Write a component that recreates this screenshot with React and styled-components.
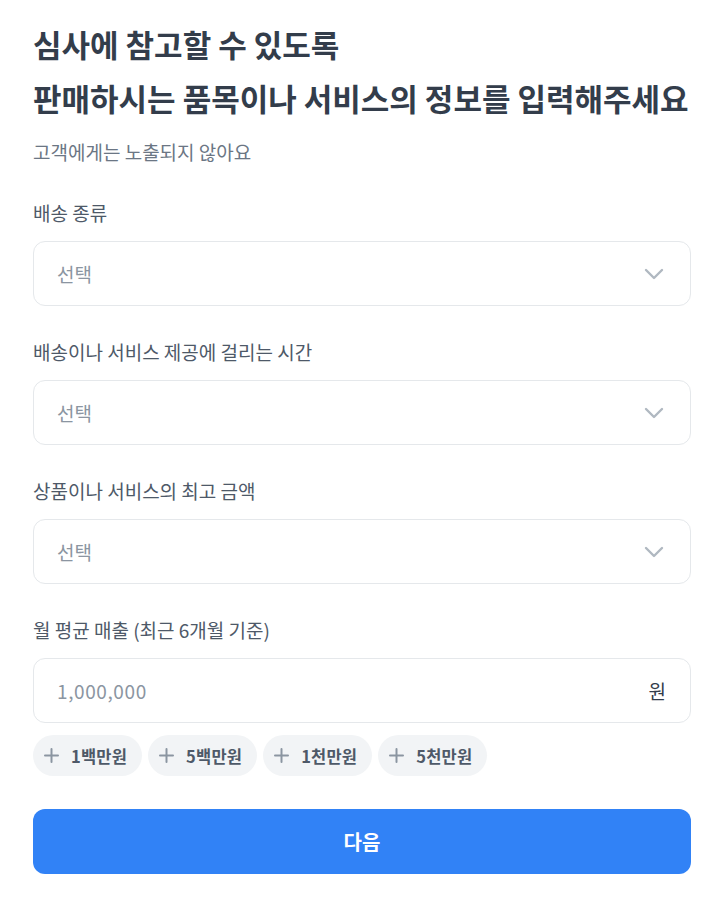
import React, {useState} from 'react'
import styled, {createGlobalStyle} from 'styled-components'

const Global = createGlobalStyle`
    html, body {
        margin:0;
        padding:0;
        background:#ffffff;
    }
    body {
        font-family: "Noto Sans CJK KR", "Noto Sans", sans-serif;
    }
`

const Page = styled.div`
    width:658px;
    padding:17px 33px 30px;
    display:flex;
    flex-direction:column;
`

const Title = styled.h1`
    margin:0;
    font-size:31px;
    line-height:54px;
    font-weight:700;
    color:#333d4b;
`

const Sub = styled.p`
    margin:14px 0 0;
    font-size:19px;
    line-height:26px;
    color:#6b7684;
`

const Field = styled.div`
    display:flex;
    flex-direction:column;
    margin-top:${p => p.first ? '36px' : '34px'};
`

const Label = styled.label`
    font-size:19px;
    line-height:24px;
    color:#4e5968;
    margin-bottom:16px;
`

const Box = styled.div`
    height:63px;
    border:1px solid #e5e8eb;
    border-radius:12px;
    display:flex;
    align-items:center;
    justify-content:space-between;
    padding:0 26px 0 23px;
    background:#fff;
`

const Placeholder = styled.span`
    font-size:19px;
    color:#8b95a1;
    letter-spacing:${p => p.num ? '0.6px' : '0'};
`

const Unit = styled.span`
    font-size:19px;
    color:#333d4b;
    margin-right:-2px;
`

const Chips = styled.div`
    display:flex;
    gap:6px;
    margin-top:12px;
`

const Chip = styled.button`
    height:41px;
    border:none;
    border-radius:21px;
    background:#f2f4f6;
    display:flex;
    align-items:center;
    gap:12px;
    padding:0 15px 0 11px;
    font-family:inherit;
    font-size:16.5px;
    font-weight:700;
    letter-spacing:0.2px;
    color:#4e5968;
    cursor:pointer;
`

const Next = styled.button`
    margin-top:33px;
    height:65px;
    border:none;
    border-radius:12px;
    background:#3182f6;
    color:#fff;
    font-family:inherit;
    font-size:20px;
    font-weight:700;
    cursor:pointer;
`

const Chevron = () => (
    <svg width="20" height="12" viewBox="0 0 20 12" fill="none" stroke="#b0b8c1" strokeWidth="2.4" strokeLinecap="round" strokeLinejoin="round">
        <path d="M2 2l8 8 8-8"/>
    </svg>
)

const Plus = () => (
    <svg width="15" height="15" viewBox="0 0 15 15" fill="none" stroke="#8b95a1" strokeWidth="2" strokeLinecap="round">
        <path d="M7.5 1v13M1 7.5h13"/>
    </svg>
)

const selects = ['배송 종류', '배송이나 서비스 제공에 걸리는 시간', '상품이나 서비스의 최고 금액']
const amounts = ['1백만원', '5백만원', '1천만원', '5천만원']

export default function App() {
    let [open] = useState(false)

    return (
        <Page>
            <Global/>
            <Title>심사에 참고할 수 있도록<br/>판매하시는 품목이나 서비스의 정보를 입력해주세요</Title>
            <Sub>고객에게는 노출되지 않아요</Sub>
            {selects.map((s, i) => (
                <Field key={s} first={i === 0}>
                    <Label>{s}</Label>
                    <Box>
                        <Placeholder>선택</Placeholder>
                        <Chevron/>
                    </Box>
                </Field>
            ))}
            <Field>
                <Label>월 평균 매출 (최근 6개월 기준)</Label>
                <Box>
                    <Placeholder num>1,000,000</Placeholder>
                    <Unit>원</Unit>
                </Box>
            </Field>
            <Chips>
                {amounts.map(a => (
                    <Chip key={a}><Plus/>{a}</Chip>
                ))}
            </Chips>
            <Next>다음</Next>
        </Page>
    )
}
